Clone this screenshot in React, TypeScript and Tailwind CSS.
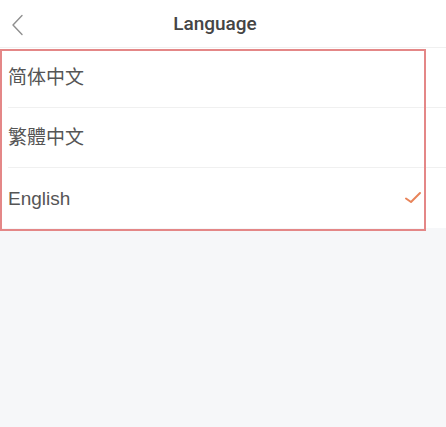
import React from "react";

const font = { fontFamily: '"Liberation Sans", "Noto Sans CJK SC", Arial, sans-serif' };

export default function App() {
  const rows = [
    { label: "简体中文", fontStack: '"Liberation Sans", "Noto Sans CJK SC", sans-serif' },
    { label: "繁體中文", fontStack: '"Liberation Sans", "Noto Sans CJK TC", sans-serif' },
    { label: "English", checked: true, fontStack: '"Liberation Sans", sans-serif' },
  ];
  return (
    <div className="relative w-[446px] h-[427px] bg-[#f6f7f9] overflow-hidden" style={font}>
      <div className="h-[48px] bg-white flex items-center relative border-b border-[#f0f0f0]">
        <svg className="absolute left-[10px] top-[14px]" width="14" height="22" viewBox="0 0 14 22" fill="none">
          <path d="M12 1.5 L3 11 L12 20.5" stroke="#8f8f8f" strokeWidth="1.4" strokeLinecap="round" strokeLinejoin="round" />
        </svg>
        <div
          className="flex-1 text-center text-[19px] font-medium text-[#454545] pr-[16px] pt-[2px]"
          style={{ fontFamily: 'Roboto, "Liberation Sans", sans-serif' }}
        >
          Language
        </div>
      </div>
      <div className="bg-white">
        {rows.map((r, i) => (
          <div key={i} className="h-[60px] pl-[8px]">
            <div className={`h-full flex items-center justify-between pr-[24px] ${i < rows.length - 1 ? "border-b border-[#f0f0f0]" : ""}`}>
              <span className="text-[19px] text-[#555555] pt-[2px]" style={{ fontFamily: r.fontStack }}>{r.label}</span>
              {r.checked && (
                <svg width="18" height="14" viewBox="0 0 18 14" fill="none">
                  <path d="M2 7.5 L7 11 L16 2" stroke="#e8845a" strokeWidth="2" strokeLinecap="round" strokeLinejoin="round" />
                </svg>
              )}
            </div>
          </div>
        ))}
      </div>
      <div className="absolute left-0 top-[49px] w-[426px] h-[182px] border-2 border-[#e48787] pointer-events-none" />
    </div>
  );
}
